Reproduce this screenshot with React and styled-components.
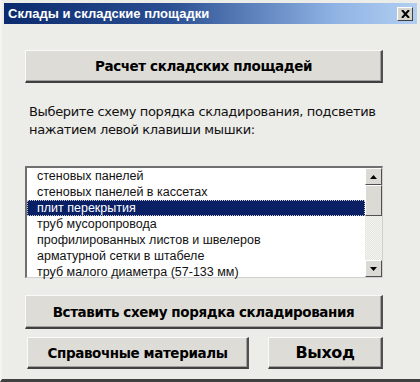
import React from 'react'
import styled, { createGlobalStyle } from 'styled-components'

const Global = createGlobalStyle`
  html, body { margin: 0; padding: 0; background: #ecece8; }
  * { box-sizing: border-box; }
`

const items = [
  'стеновых панелей',
  'стеновых панелей в кассетах',
  'плит перекрытия',
  'труб мусоропровода',
  'профилированных листов и швелеров',
  'арматурной сетки в штабеле',
  'труб малого диаметра (57-133 мм)',
]

function App() {
  return (
    <Window>
      <Global />
      <TitleBar>
        <Title>Склады и складские площадки</Title>
        <CloseBtn>
          <svg width="9" height="8" viewBox="0 0 9 8">
            <path d="M1 0 L8 8 M8 0 L1 8" stroke="#000" strokeWidth="2" />
          </svg>
        </CloseBtn>
      </TitleBar>
      <Body>
        <Button $top={26} $height={33}>Расчет складских площадей</Button>
        <Hint>
          Выберите схему порядка складирования, подсветив<br />
          нажатием левой клавиши мышки:
        </Hint>
        <ListBox>
          <Items>
            {items.map((t, i) => (
              <Item key={t} $selected={i === 2}>{t}</Item>
            ))}
          </Items>
          <ScrollBar>
            <Arrow>
              <svg width="7" height="4" viewBox="0 0 7 4"><path d="M3.5 0 L7 4 L0 4 Z" fill="#000" /></svg>
            </Arrow>
            <Thumb />
            <Track />
            <Arrow>
              <svg width="7" height="4" viewBox="0 0 7 4"><path d="M0 0 L7 0 L3.5 4 Z" fill="#000" /></svg>
            </Arrow>
          </ScrollBar>
        </ListBox>
        <Button $top={17} $height={34}>Вставить схему порядка складирования</Button>
        <Row>
          <Button $top={0} $height={32} $width={222}>Справочные материалы</Button>
          <Button $top={0} $height={32} $width={115} $size={16}>Выход</Button>
        </Row>
      </Body>
    </Window>
  )
}

export default App

const Window = styled.div`
  width: 420px;
  height: 382px;
  background: #ecece8;
  border-left: 2px solid #f4f4f2;
  border-bottom: 3px solid #404040;
  display: flex;
  flex-direction: column;
  overflow: hidden;
`

const TitleBar = styled.div`
  margin: 3px 3px 0 2px;
  height: 21px;
  background: linear-gradient(to right, #0c2a6e 0%, #2a4f92 40%, #8fb3e4 80%, #b2cff2 100%);
  display: flex;
  align-items: center;
  justify-content: space-between;
  padding: 0 4px 0 4px;
`

const Title = styled.div`
  color: #fff;
  font-family: 'Liberation Sans', Arial, sans-serif;
  font-weight: bold;
  font-size: 13px;
`

const CloseBtn = styled.div`
  width: 16px;
  height: 14px;
  background: #d8d6cc;
  border-top: 1px solid #fff;
  border-left: 1px solid #fff;
  border-right: 1px solid #404040;
  border-bottom: 1px solid #404040;
  display: flex;
  align-items: center;
  justify-content: center;
`

const Body = styled.div`
  padding: 0 37px 0 23px;
  display: flex;
  flex-direction: column;
`

const Button = styled.div`
  margin-top: ${p => p.$top}px;
  height: ${p => p.$height}px;
  width: ${p => (p.$width ? p.$width + 'px' : 'auto')};
  background: #dedcd6;
  border-top: 1px solid #fafafa;
  border-left: 1px solid #fafafa;
  border-right: 2px solid #505050;
  border-bottom: 2px solid #404040;
  box-shadow: inset -1px -1px 0 #a0a0a0;
  display: flex;
  align-items: center;
  justify-content: center;
  font-family: 'DejaVu Sans', sans-serif;
  font-weight: bold;
  font-size: ${p => p.$size || 13.5}px;
  letter-spacing: -0.4px;
  color: #000;
  white-space: nowrap;
`

const Hint = styled.div`
  margin-top: 20px;
  margin-left: 4px;
  margin-right: -10px;
  font-family: 'DejaVu Sans', sans-serif;
  font-size: 13px;
  letter-spacing: -0.35px;
  line-height: 18px;
  color: #111;
  white-space: nowrap;
`

const ListBox = styled.div`
  margin-top: 27px;
  height: 112px;
  background: #fff;
  border-top: 2px solid #707070;
  border-left: 2px solid #707070;
  border-right: 1px solid #d0d0d0;
  border-bottom: 1px solid #d0d0d0;
  display: flex;
`

const Items = styled.div`
  flex: 1;
`

const Item = styled.div`
  height: 16px;
  line-height: 16px;
  padding-left: 10px;
  font-family: 'Liberation Sans', Arial, sans-serif;
  font-size: 12.5px;
  color: ${p => (p.$selected ? '#fff' : '#111')};
  background: ${p => (p.$selected ? '#0a1f64' : 'transparent')};
  outline: ${p => (p.$selected ? '1px dotted #ccc' : 'none')};
  outline-offset: -1px;
`

const ScrollBar = styled.div`
  width: 17px;
  display: flex;
  flex-direction: column;
  background: #eeeeea;
  background-image: repeating-conic-gradient(#f4f4f0 0 25%, #e4e4e0 0 50%);
  background-size: 2px 2px;
`

const Arrow = styled.div`
  height: 17px;
  background: #dcdad4;
  border-top: 1px solid #fff;
  border-left: 1px solid #fff;
  border-right: 1px solid #505050;
  border-bottom: 1px solid #505050;
  display: flex;
  align-items: center;
  justify-content: center;
`

const Thumb = styled.div`
  height: 31px;
  background: #dcdad4;
  border-top: 1px solid #fff;
  border-left: 1px solid #fff;
  border-right: 1px solid #505050;
  border-bottom: 1px solid #505050;
`

const Track = styled.div`
  flex: 1;
`

const Row = styled.div`
  margin-top: 8px;
  margin-left: 2px;
  display: flex;
  justify-content: space-between;
`
